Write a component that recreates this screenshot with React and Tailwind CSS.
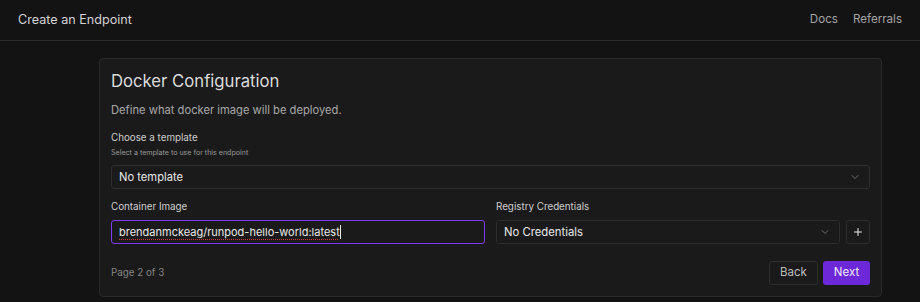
import React from "react";
import { ChevronDown, Plus } from "lucide-react";

const App = () => {
  return (
    <div
      className="w-[920px] h-[302px] bg-[#131313] text-[#e5e5e5] overflow-hidden flex flex-col"
      style={{ fontFamily: "Inter, 'Liberation Sans', sans-serif" }}
    >
      {/* top bar */}
      <div className="h-[41px] shrink-0 flex items-center justify-between pl-[18px] pr-[18px] border-b border-[#2c2c2c]">
        <span className="text-[12.6px] text-[#d4d4d4]">Create an Endpoint</span>
        <div className="flex items-center gap-[15px] text-[11.6px] text-[#a3a3a3]">
          <span>Docs</span>
          <span>Referrals</span>
        </div>
      </div>

      <div className="pl-[99px] pr-[38px] pt-[17px]">
        <div className="bg-[#1a1a1a] border border-[#2a2a2a] rounded-[4px] px-[11px] pt-[10px] pb-[11px]">
          <h2 className="text-[16.7px] leading-[24px] text-[#dcdcdc]">Docker Configuration</h2>
          <p className="mt-[9px] text-[11.2px] leading-[16px] text-[#a8a8a8]">
            Define what docker image will be deployed.
          </p>

          <div className="mt-[13px]">
            <div className="text-[9.8px] leading-[13px] text-[#cfcfcf]">Choose a template</div>
            <div className="mt-[4px] text-[7.1px] leading-[10px] text-[#9a9a9a]">
              Select a template to use for this endpoint
            </div>
            <div className="mt-[7px] h-[24px] border border-[#2e2e2e] rounded-[3px] flex items-center justify-between pl-[7px] pr-[8px]">
              <span className="text-[11.2px] text-[#e8e8e8]">No template</span>
              <ChevronDown size={12} strokeWidth={1.5} className="text-[#8a8a8a]" />
            </div>
          </div>

          <div className="mt-[11px] flex gap-[11px]">
            <div className="w-[374px]">
              <div className="text-[9.8px] leading-[13px] text-[#cfcfcf]">Container Image</div>
              <div className="mt-[7px] h-[24px] border border-[#7c3aed] rounded-[3px] flex items-center pl-[7px]">
                <span className="text-[11px] text-[#e8e8e8] underline decoration-dotted decoration-[#d13b3b] underline-offset-[3px]">
                  brendanmckeag/runpod-hello-world:latest
                </span>
                <span className="w-px h-[14px] bg-[#e8e8e8]" />
              </div>
            </div>
            <div className="flex-1">
              <div className="text-[9.8px] leading-[13px] text-[#cfcfcf]">Registry Credentials</div>
              <div className="mt-[7px] flex gap-[6px]">
                <div className="flex-1 h-[24px] border border-[#2e2e2e] rounded-[3px] flex items-center justify-between pl-[7px] pr-[8px]">
                  <span className="text-[11.3px] text-[#e8e8e8]">No Credentials</span>
                  <ChevronDown size={12} strokeWidth={1.5} className="text-[#8a8a8a]" />
                </div>
                <div className="w-[24px] h-[24px] border border-[#2e2e2e] rounded-[3px] flex items-center justify-center">
                  <Plus size={12} strokeWidth={2} className="text-[#e8e8e8]" />
                </div>
              </div>
            </div>
          </div>

          <div className="mt-[17px] flex items-center justify-between">
            <span className="text-[9.8px] text-[#858585]">Page 2 of 3</span>
            <div className="flex gap-[5px]">
              <div className="w-[49px] h-[24px] border border-[#2e2e2e] rounded-[3px] flex items-center justify-center text-[11.5px] text-[#bdbdbd]">
                Back
              </div>
              <div className="w-[47px] h-[24px] bg-[#6d28d9] rounded-[3px] flex items-center justify-center text-[11.5px] text-[#f0eaff]">
                Next
              </div>
            </div>
          </div>
        </div>
      </div>
    </div>
  );
};

export default App;
